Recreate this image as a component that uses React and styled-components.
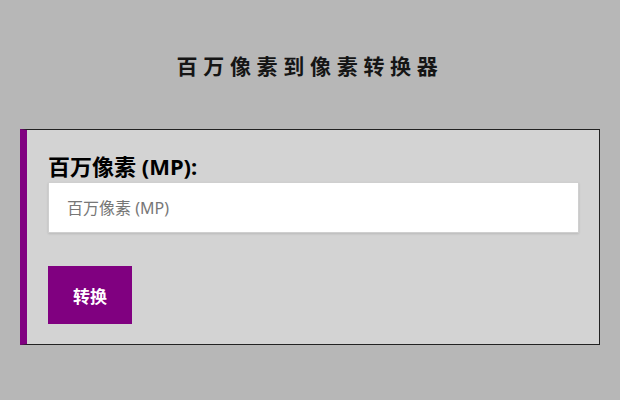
import React from 'react';
import styled, { createGlobalStyle } from 'styled-components';

const GlobalStyle = createGlobalStyle`
  html, body {
    margin: 0;
    padding: 0;
    background-color: #b7b7b7;
    font-family: "Noto Sans", "Noto Sans CJK SC", sans-serif;
  }
`;

// --- Styled Components ---

const Page = styled.div`
  width: 620px;
  min-height: 400px;
  padding: 50px 20px 0;
  box-sizing: border-box;
`;

const Title = styled.h1`
  margin: 0 0 47px;
  height: 32px;
  line-height: 32px;
  text-align: center;
  font-size: 21px;
  font-weight: 700;
  letter-spacing: 5.7px;
  color: #151515;
`;

const Card = styled.div`
  background-color: #d3d3d3;
  border: 1px solid #222;
  border-left: 7px solid #800080;
  padding: 20px 20px 20px 21px;
`;

const Label = styled.label`
  display: block;
  height: 32px;
  line-height: 32px;
  font-size: 22px;
  font-weight: 700;
  color: #000;
`;

const Input = styled.input`
  display: block;
  width: 100%;
  height: 51px;
  box-sizing: border-box;
  margin: 0 0 33px;
  padding: 0 18px;
  border: 1px solid #cfcfcf;
  background: #fff;
  box-shadow: 0 1px 2px rgba(0, 0, 0, 0.12);
  font-family: inherit;
  font-size: 16px;
  color: #222;
  outline: none;

  &::placeholder {
    color: #777;
  }
`;

const Button = styled.button`
  display: block;
  height: 58px;
  padding: 0 25px;
  border: none;
  background-color: #800080;
  color: #fff;
  font-family: inherit;
  font-size: 17px;
  font-weight: 700;
  cursor: pointer;
`;

// --- Component ---

export default function App() {
  return (
    <>
      <GlobalStyle />
      <Page>
        <Title>百万像素到像素转换器</Title>
        <Card>
          <Label htmlFor="mp">百万像素 (MP):</Label>
          <Input id="mp" type="text" placeholder="百万像素 (MP)" />
          <Button>转换</Button>
        </Card>
      </Page>
    </>
  );
}
